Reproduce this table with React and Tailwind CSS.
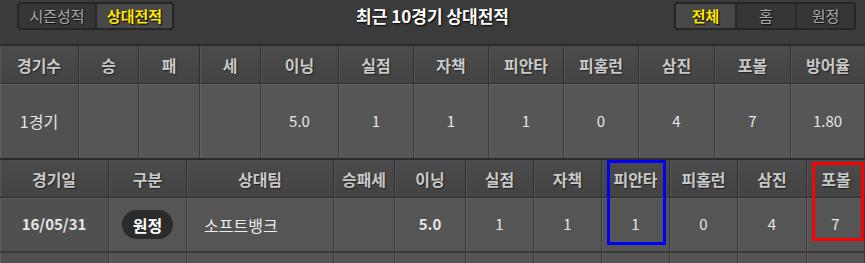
import React from "react";

const FONT = { fontFamily: '"Noto Sans CJK KR", "Malgun Gothic", sans-serif' };

const t1Heads = ["경기수", "승", "패", "세", "이닝", "실점", "자책", "피안타", "피홈런", "삼진", "포볼", "방어율"];
const t1Widths = ["w-[79px]", "w-[60px]", "w-[61px]", "w-[61px]", "w-[78px]", "w-[75px]", "w-[75px]", "w-[75px]", "w-[75px]", "w-[76px]", "w-[76px]", "w-[74px]"];
const t1Data = ["1경기", "", "", "", "5.0", "1", "1", "1", "0", "4", "7", "1.80"];

const t2Heads = ["경기일", "구분", "상대팀", "승패세", "이닝", "실점", "자책", "피안타", "피홈런", "삼진", "포볼"];
const t2Widths = ["w-[109px]", "w-[78px]", "w-[147px]", "w-[61px]", "w-[71px]", "w-[68px]", "w-[68px]", "w-[68px]", "w-[68px]", "w-[69px]", "w-[58px]"];

function HeadRow({ heads, widths }) {
  return (
    <div className="flex h-[39px] border-t-2 border-[#2b2b2b]">
      {heads.map((h, i) => (
        <div
          key={i}
          className={`${widths[i]} shrink-0 flex items-center justify-center bg-linear-to-b from-[#4b4b4b] to-[#434343] border-r border-[#2f2f2f] shadow-[inset_1px_0_0_#555] text-[16px] font-bold text-[#c9c9c9] [text-shadow:1px_1px_1px_#222] ${i === heads.length - 1 ? "border-r-0" : ""}`}
        >
          {h}
        </div>
      ))}
    </div>
  );
}

function Tabs({ items, active, widths }) {
  return (
    <div className="flex h-[28px] rounded-[4px] border-2 border-[#262626] bg-[#303030] overflow-hidden">
      {items.map((it, i) => (
        <div
          key={i}
          className={`${widths[i]} flex items-center justify-center text-[15px] ${
            i === active
              ? "bg-[#484848] text-[#ffe600] font-bold [text-shadow:1px_1px_1px_#000]"
              : "bg-[#363636] text-[#a9a9a9] [text-shadow:1px_1px_1px_#111]"
          } ${i > 0 ? "border-l-2 border-[#2a2a2a]" : ""}`}
        >
          {it}
        </div>
      ))}
    </div>
  );
}

export default function App() {
  return (
    <div style={FONT} className="relative w-[865px] h-[263px] overflow-hidden bg-[#3c3c3c]">
      {/* top bar */}
      <div className="relative h-[44px] bg-[#3b3b3b] flex items-start justify-between pt-[2px] pl-[17px] pr-[9px]">
        <Tabs items={["시즌성적", "상대전적"]} active={1} widths={["w-[76px]", "w-[77px]"]} />
        <div className="absolute left-0 right-0 top-[3px] text-center text-[17px] font-bold text-white [text-shadow:1px_1px_2px_#000] pointer-events-none">
          최근 10경기 상대전적
        </div>
        <Tabs items={["전체", "홈", "원정"]} active={0} widths={["w-[59px]", "w-[60px]", "w-[59px]"]} />
      </div>

      {/* table 1 */}
      <HeadRow heads={t1Heads} widths={t1Widths} />
      <div className="flex h-[75px] border-t border-[#2f2f2f]">
        {t1Data.map((d, i) => (
          <div
            key={i}
            className={`${t1Widths[i]} shrink-0 flex items-center justify-center border-r border-[#3a3a3a] shadow-[inset_1px_1px_0_#626262] text-[#e6e6e6] ${
              i === 0 ? "bg-[#515151] text-[16px]" : "bg-[#565656] text-[15px]"
            }`}
          >
            {d}
          </div>
        ))}
      </div>

      {/* table 2 */}
      <HeadRow heads={t2Heads} widths={t2Widths} />
      <div className="flex h-[54px] border-t border-[#2f2f2f]">
        <div className={`${t2Widths[0]} shrink-0 flex items-center justify-center bg-[#505050] border-r border-[#3a3a3a] shadow-[inset_1px_1px_0_#5e5e5e] text-[15px] font-bold text-[#e6e6e6]`}>
          16/05/31
        </div>
        <div className={`${t2Widths[1]} shrink-0 flex items-center justify-center bg-[#555555] border-r border-[#3a3a3a] shadow-[inset_1px_1px_0_#626262]`}>
          <span className="w-[51px] h-[29px] rounded-full bg-[#2b2b2b] flex items-center justify-center text-[16px] font-bold text-white">
            원정
          </span>
        </div>
        <div className={`${t2Widths[2]} shrink-0 flex items-center pl-[17px] bg-[#555555] border-r border-[#3a3a3a] shadow-[inset_1px_1px_0_#626262] text-[16px] text-[#ececec]`}>
          소프트뱅크
        </div>
        <div className={`${t2Widths[3]} shrink-0 bg-[#555555] border-r border-[#3a3a3a] shadow-[inset_1px_1px_0_#626262]`} />
        <div className={`${t2Widths[4]} shrink-0 flex items-center justify-center bg-[#555555] border-r border-[#3a3a3a] shadow-[inset_1px_1px_0_#626262] text-[15px] font-bold text-[#e6e6e6]`}>
          5.0
        </div>
        {["1", "1", "1", "0", "4", "7"].map((d, i) => (
          <div
            key={i}
            className={`${t2Widths[i + 5]} shrink-0 flex items-center justify-center bg-[#555555] border-r border-[#3a3a3a] shadow-[inset_1px_1px_0_#626262] text-[15px] text-[#e6e6e6]`}
          >
            {d}
          </div>
        ))}
      </div>
      <div className="flex h-[20px] border-t-2 border-[#3a3a3a]">
        {t2Widths.map((w, i) => (
          <div key={i} className={`${w} shrink-0 ${i === 0 ? "bg-[#505050]" : "bg-[#555555]"} border-r border-[#3a3a3a] shadow-[inset_1px_0_0_#626262]`} />
        ))}
      </div>

      {/* highlight boxes */}
      <div className="absolute left-[607px] top-[160px] w-[59px] h-[85px] border-[3px] border-[#0000ff]" />
      <div className="absolute left-[812px] top-[162px] w-[52px] h-[79px] border-[3px] border-[#ff0000]" />
    </div>
  );
}
